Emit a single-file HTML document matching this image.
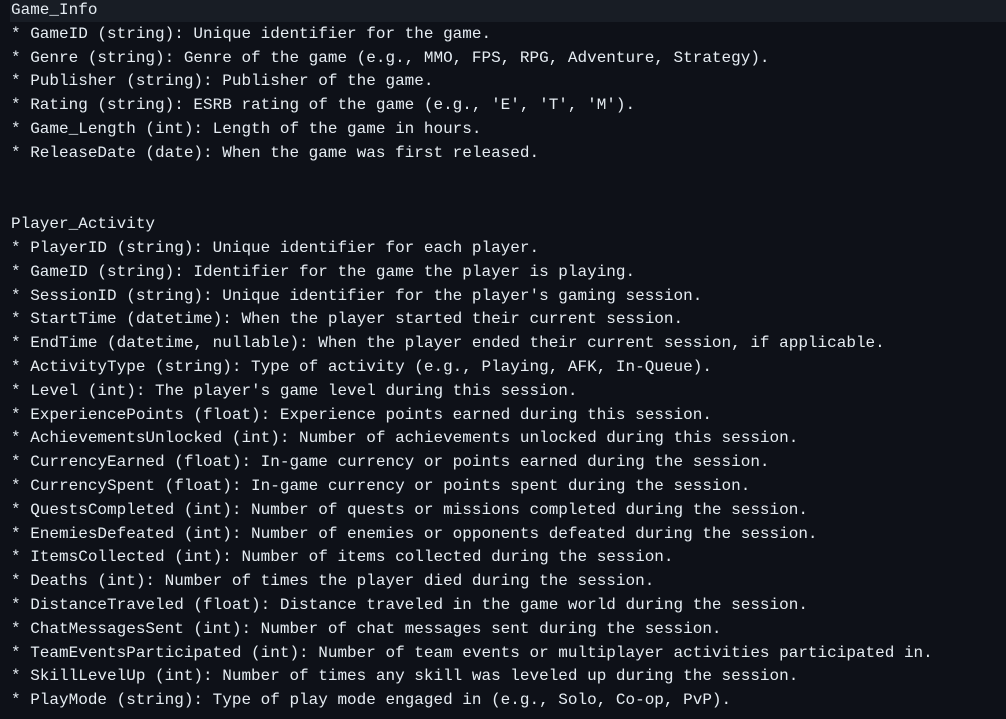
<!DOCTYPE html>
<html><head><meta charset="utf-8"><style>
html,body{margin:0;padding:0;background:#0e1118;width:1006px;height:719px;overflow:hidden}
.band{position:absolute;left:10px;top:0;width:996px;height:22px;background:#181d25}
pre{position:absolute;left:11px;top:-1px;margin:0;font-family:"Liberation Mono",monospace;font-size:16px;line-height:23.8px;color:#e6edf3;white-space:pre}
</style></head><body>
<div class="band"></div>
<pre>Game_Info
* GameID (string): Unique identifier for the game.
* Genre (string): Genre of the game (e.g., MMO, FPS, RPG, Adventure, Strategy).
* Publisher (string): Publisher of the game.
* Rating (string): ESRB rating of the game (e.g., 'E', 'T', 'M').
* Game_Length (int): Length of the game in hours.
* ReleaseDate (date): When the game was first released.


Player_Activity
* PlayerID (string): Unique identifier for each player.
* GameID (string): Identifier for the game the player is playing.
* SessionID (string): Unique identifier for the player's gaming session.
* StartTime (datetime): When the player started their current session.
* EndTime (datetime, nullable): When the player ended their current session, if applicable.
* ActivityType (string): Type of activity (e.g., Playing, AFK, In-Queue).
* Level (int): The player's game level during this session.
* ExperiencePoints (float): Experience points earned during this session.
* AchievementsUnlocked (int): Number of achievements unlocked during this session.
* CurrencyEarned (float): In-game currency or points earned during the session.
* CurrencySpent (float): In-game currency or points spent during the session.
* QuestsCompleted (int): Number of quests or missions completed during the session.
* EnemiesDefeated (int): Number of enemies or opponents defeated during the session.
* ItemsCollected (int): Number of items collected during the session.
* Deaths (int): Number of times the player died during the session.
* DistanceTraveled (float): Distance traveled in the game world during the session.
* ChatMessagesSent (int): Number of chat messages sent during the session.
* TeamEventsParticipated (int): Number of team events or multiplayer activities participated in.
* SkillLevelUp (int): Number of times any skill was leveled up during the session.
* PlayMode (string): Type of play mode engaged in (e.g., Solo, Co-op, PvP).</pre>
</body></html>
